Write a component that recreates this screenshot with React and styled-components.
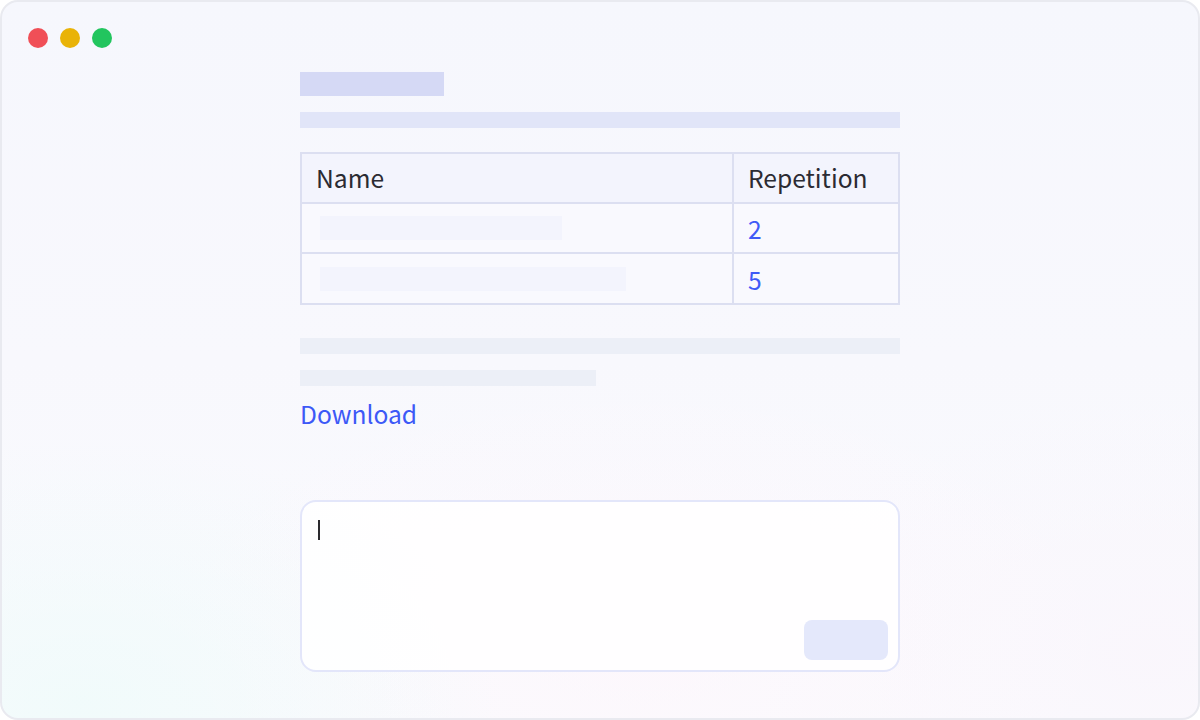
import React from "react";
import styled, { createGlobalStyle } from "styled-components";

const Global = createGlobalStyle`
  html, body { margin: 0; padding: 0; width: 1200px; height: 720px; overflow: hidden; background: #ffffff; }
  body { font-family: "Noto Sans CJK SC", "Noto Sans", sans-serif; }
  * { box-sizing: border-box; }
`;

const Window = styled.div`
  width: 1200px;
  height: 720px;
  border: 2px solid #e9eaf0;
  border-radius: 18px;
  overflow: hidden;
  background:
    radial-gradient(ellipse 420px 260px at 80px 700px, rgba(238, 251, 250, 0.75), rgba(238, 251, 250, 0) 100%),
    radial-gradient(ellipse 500px 260px at 640px 640px, rgba(253, 247, 252, 0.9), rgba(253, 247, 252, 0) 100%),
    radial-gradient(ellipse 400px 260px at 1150px 650px, rgba(250, 246, 252, 0.9), rgba(250, 246, 252, 0) 100%),
    linear-gradient(180deg, #f6f7fd 0%, #f8f8fd 50%, #fafbfe 100%);
  display: flex;
  flex-direction: column;
  padding: 26px 0 0 26px;
`;

const Lights = styled.div`
  display: flex;
  gap: 12px;
`;

const Light = styled.span`
  width: 20px;
  height: 20px;
  border-radius: 50%;
  background: ${(p) => p.$color};
`;

const Content = styled.main`
  width: 600px;
  margin-left: 272px;
  margin-top: 24px;
  display: flex;
  flex-direction: column;
`;

const Bar = styled.div`
  width: ${(p) => p.$w}px;
  height: ${(p) => p.$h}px;
  background: ${(p) => p.$c};
  margin-top: ${(p) => p.$mt || 0}px;
`;

const Table = styled.table`
  margin-top: 24px;
  width: 600px;
  border-collapse: collapse;
  border: 2px solid #dcdff1;
`;

const Th = styled.th`
  height: 50px;
  padding: 0 14px 2px 14px;
  text-align: left;
  font-weight: 400;
  font-size: 24.6px;
  color: #2b2b33;
  background: #f3f4fd;
  border: 2px solid #dcdff1;
  width: ${(p) => p.$w || "auto"};
`;

const Td = styled.td`
  height: ${(p) => p.$h || 50}px;
  padding: 0 14px 0 ${(p) => (p.$pl ? p.$pl : 14)}px;
  font-size: 24.6px;
  color: #3f5bf6;
  border: 2px solid #dcdff1;
  background: rgba(250, 250, 255, 0.6);
  vertical-align: middle;
`;

const CellBar = styled.div`
  width: ${(p) => p.$w}px;
  height: 24px;
  background: #f3f4fd;
`;

const Link = styled.a`
  margin-top: 10px;
  font-size: 24.6px;
  line-height: 34px;
  color: #3d59f7;
  text-decoration: none;
  align-self: flex-start;
`;

const InputBox = styled.div`
  margin-top: 70px;
  width: 600px;
  height: 172px;
  border: 2px solid #e3e6fa;
  border-radius: 16px;
  background: rgba(255, 255, 255, 0.85);
  display: flex;
  flex-direction: column;
  justify-content: space-between;
  padding: 18px 10px 10px 16px;
`;

const Caret = styled.span`
  width: 2px;
  height: 20px;
  background: #2a2a2e;
`;

const SendButton = styled.button`
  align-self: flex-end;
  width: 84px;
  height: 40px;
  border: none;
  border-radius: 8px;
  background: #e4e8fb;
`;

export default function App() {
  return (
    <>
      <Global />
      <Window>
        <Lights>
          <Light $color="#f04f57" />
          <Light $color="#e9b308" />
          <Light $color="#22c55e" />
        </Lights>
        <Content>
          <Bar $w={144} $h={24} $c="#d5d9f5" />
          <Bar $w={600} $h={16} $c="#e1e5f8" $mt={16} />
          <Table>
            <thead>
              <tr>
                <Th $w="432px">Name</Th>
                <Th>Repetition</Th>
              </tr>
            </thead>
            <tbody>
              <tr>
                <Td $pl={18}><CellBar $w={242} /></Td>
                <Td>2</Td>
              </tr>
              <tr>
                <Td $pl={18} $h={51}><CellBar $w={306} /></Td>
                <Td $h={51}>5</Td>
              </tr>
            </tbody>
          </Table>
          <Bar $w={600} $h={16} $c="#eceff7" $mt={33} />
          <Bar $w={296} $h={16} $c="#eceff7" $mt={16} />
          <Link href="#">Download</Link>
          <InputBox>
            <Caret />
            <SendButton aria-label="Send" />
          </InputBox>
        </Content>
      </Window>
    </>
  );
}
